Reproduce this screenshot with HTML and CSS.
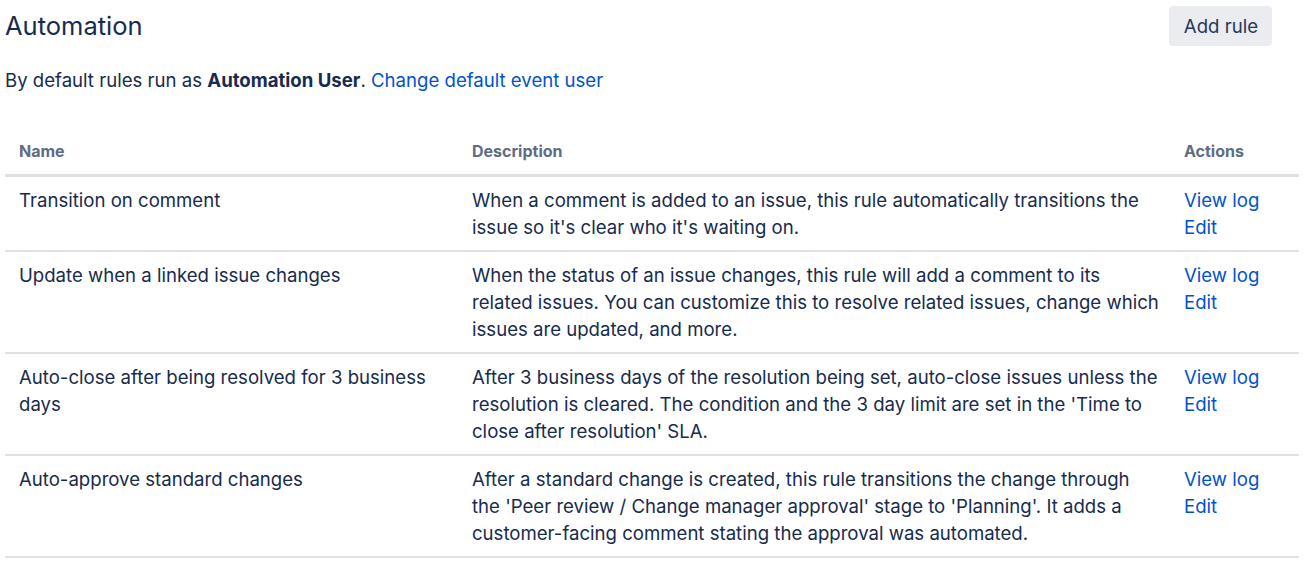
FILE: index.html
```html
<!DOCTYPE html>
<html>
<head>
<meta charset="utf-8">
<link rel="stylesheet" href="styles.css">
</head>
<body>
<div class="page">
  <header class="top">
    <h1 class="title">Automation</h1>
    <button class="btn">Add rule</button>
  </header>
  <p class="intro">By default rules run as <strong>Automation User</strong>. <a href="#">Change default event user</a></p>
  <table class="rules">
    <colgroup>
      <col class="col-name">
      <col class="col-desc">
      <col class="col-act">
    </colgroup>
    <thead>
      <tr><th>Name</th><th>Description</th><th>Actions</th></tr>
    </thead>
    <tbody>
      <tr>
        <td>Transition on comment</td>
        <td class="desc">When a comment is added to an issue, this rule automatically transitions the issue so it's clear who it's waiting on.</td>
        <td><a href="#">View log</a><br><a href="#">Edit</a></td>
      </tr>
      <tr>
        <td>Update when a linked issue changes</td>
        <td class="desc">When the status of an issue changes, this rule will add a comment to its related issues. You can customize this to resolve related issues, change which issues are updated, and more.</td>
        <td><a href="#">View log</a><br><a href="#">Edit</a></td>
      </tr>
      <tr>
        <td>Auto-close after being resolved for 3 business days</td>
        <td class="desc">After 3 business days of the resolution being set, auto-close issues unless the resolution is cleared. The condition and the 3 day limit are set in the 'Time to close after resolution' SLA.</td>
        <td><a href="#">View log</a><br><a href="#">Edit</a></td>
      </tr>
      <tr>
        <td>Auto-approve standard changes</td>
        <td class="desc">After a standard change is created, this rule transitions the change through the 'Peer review / Change manager approval' stage to 'Planning'. It adds a customer-facing comment stating the approval was automated.</td>
        <td><a href="#">View log</a><br><a href="#">Edit</a></td>
      </tr>
    </tbody>
  </table>
</div>
</body>
</html>
```

FILE: styles.css
```css
html, body { margin: 0; padding: 0; background: #fff; }
body {
  font-family: Inter, "Noto Sans", "Liberation Sans", sans-serif;
  color: #172b4d;
  font-size: 18.6px;
  line-height: 27px;
}
.page { padding: 6px 5px 0 5px; }
.top {
  display: flex;
  justify-content: space-between;
  align-items: center;
  padding-right: 27px;
}
.title {
  margin: 0;
  font-size: 25.5px;
  font-weight: 400;
  line-height: 40px;
  color: #172b4d;
}
.btn {
  font-family: inherit;
  font-size: 18.6px;
  color: #253858;
  background: #ebecf0;
  border: none;
  border-radius: 4px;
  height: 40px;
  padding: 0 14px 0 15px;
}
.intro { margin: 21px 0 0 0; }
.intro strong { font-weight: 700; }
a { color: #0052cc; text-decoration: none; }
.rules {
  width: 1294px;
  table-layout: fixed;
  border-collapse: collapse;
  margin-top: 37px;
}
.col-name { width: 453px; }
.col-desc { width: 712px; }
.col-act { width: 129px; }
.rules th {
  text-align: left;
  font-size: 16px;
  font-weight: 700;
  color: #5e6c84;
  padding: 7px 14px 9px 14px;
  border-bottom: 3px solid #dfe1e6;
}
.rules td {
  vertical-align: top;
  padding: 10px 14px 9px 14px;
  border-bottom: 2px solid #dfe1e6;
}
.rules td.desc { padding-right: 11px; }
```
